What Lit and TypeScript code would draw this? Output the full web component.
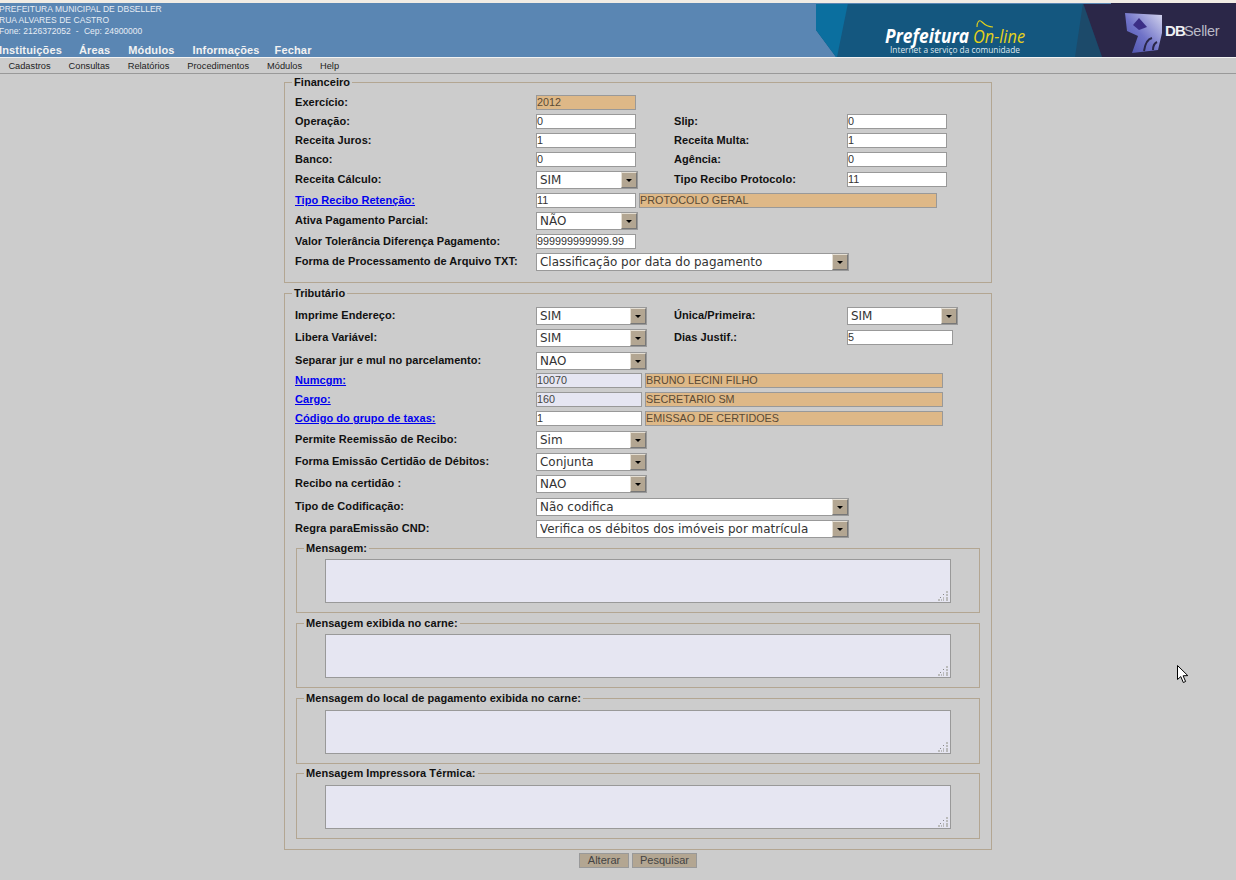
import { LitElement, html, css, nothing } from 'lit';
import { customElement } from 'lit/decorators.js';

type Ctl =
  | { k: 'in'; v: string; w: number; ro?: 'tan' | 'lav'; desc?: string; dw?: number; dg?: number }
  | { k: 'sel'; v: string; w: number };

type Row = { h: number; label: string; link?: boolean; c: Ctl; label2?: string; c2?: Ctl; o2?: number };

const fin: Row[] = [
  { h: 19, label: 'Exercício:', c: { k: 'in', v: '2012', w: 100, ro: 'tan' } },
  { h: 19, label: 'Operação:', c: { k: 'in', v: '0', w: 100 }, label2: 'Slip:', c2: { k: 'in', v: '0', w: 100 } },
  { h: 19, label: 'Receita Juros:', c: { k: 'in', v: '1', w: 100 }, label2: 'Receita Multa:', c2: { k: 'in', v: '1', w: 100 } },
  { h: 19, label: 'Banco:', c: { k: 'in', v: '0', w: 100 }, label2: 'Agência:', c2: { k: 'in', v: '0', w: 100 } },
  { h: 22, label: 'Receita Cálculo:', c: { k: 'sel', v: 'SIM', w: 102 }, label2: 'Tipo Recibo Protocolo:', c2: { k: 'in', v: '11', w: 100 }, o2: 1 },
  { h: 19, label: 'Tipo Recibo Retenção:', link: true, c: { k: 'in', v: '11', w: 100, desc: 'PROTOCOLO GERAL', dw: 298, dg: 3 } },
  { h: 22, label: 'Ativa Pagamento Parcial:', c: { k: 'sel', v: 'NÃO', w: 102 } },
  { h: 19, label: 'Valor Tolerância Diferença Pagamento:', c: { k: 'in', v: '999999999999.99', w: 100 } },
  { h: 18, label: 'Forma de Processamento de Arquivo TXT:', c: { k: 'sel', v: 'Classificação por data do pagamento', w: 313 } },
];

const trib: Row[] = [
  { h: 22, label: 'Imprime Endereço:', c: { k: 'sel', v: 'SIM', w: 111 }, label2: 'Única/Primeira:', c2: { k: 'sel', v: 'SIM', w: 111 } },
  { h: 23, label: 'Libera Variável:', c: { k: 'sel', v: 'SIM', w: 111 }, label2: 'Dias Justif.:', c2: { k: 'in', v: '5', w: 106 }, o2: 1 },
  { h: 21, label: 'Separar jur e mul no parcelamento:', c: { k: 'sel', v: 'NAO', w: 111 } },
  { h: 19, label: 'Numcgm:', link: true, c: { k: 'in', v: '10070', w: 106, ro: 'lav', desc: 'BRUNO LECINI FILHO', dw: 298, dg: 3 } },
  { h: 19, label: 'Cargo:', link: true, c: { k: 'in', v: '160', w: 106, ro: 'lav', desc: 'SECRETARIO SM', dw: 298, dg: 3 } },
  { h: 20, label: 'Código do grupo de taxas:', link: true, c: { k: 'in', v: '1', w: 106, desc: 'EMISSAO DE CERTIDOES', dw: 298, dg: 3 } },
  { h: 22, label: 'Permite Reemissão de Recibo:', c: { k: 'sel', v: 'Sim', w: 111 } },
  { h: 22, label: 'Forma Emissão Certidão de Débitos:', c: { k: 'sel', v: 'Conjunta', w: 111 } },
  { h: 23, label: 'Recibo na certidão :', c: { k: 'sel', v: 'NAO', w: 111 } },
  { h: 22, label: 'Tipo de Codificação:', c: { k: 'sel', v: 'Não codifica', w: 313 } },
  { h: 18, label: 'Regra paraEmissão CND:', c: { k: 'sel', v: 'Verifica os débitos dos imóveis por matrícula', w: 313 } },
];

const msgs = [
  { t: 'Mensagem:', gap: 4, pad: 4 },
  { t: 'Mensagem exibida no carne:', gap: 4, pad: 4 },
  { t: 'Mensagem do local de pagamento exibida no carne:', gap: 4, pad: 5 },
  { t: 'Mensagem Impressora Térmica:', gap: 3, pad: 5 },
];

@customElement('app-root')
export class AppRoot extends LitElement {
  static styles = css`
    :host {
      display: block;
      position: relative;
      height: 880px;
      overflow: hidden;
      background: #cccccc;
      font-family: 'Liberation Sans', Arial, sans-serif;
      color: #111;
    }

    .strip { height: 3px; background: #f1ece4; }
    .head { position: relative; height: 54px; background: #5a86b3; color: #f2f2f2; overflow: hidden; }
    .info { font-size: 8.5px; word-spacing: 0.25px; line-height: 11px; padding-top: 1px; margin-left: -1px; white-space: pre; color: #e6ecf3; }
    .main-menu { display: flex; gap: 18px; margin: 7px 0 0 -1px; font-size: 11px; line-height: 13px; font-weight: bold; letter-spacing: 0.15px; }
    .main-menu span:first-child { margin-right: -1px; }
    .main-menu span:last-child { margin-left: -3px; }
    .banner { position: absolute; right: 0; top: 0; display: block; }
    .sub-menu {
      display: flex; gap: 18px; height: 15px; padding-left: 8.4px;
      border-top: 1px solid #f2f2f2; border-bottom: 1px solid #999;
      font-size: 9.25px; line-height: 16px; color: #222; background: #ccc;
    }

    .form { width: 708px; margin: 2px 0 0 284px; }
    fieldset { box-sizing: border-box; margin: 0; border: 1px solid #b3a692; min-width: 0; }
    legend { padding: 0 2px; font-size: 11px; font-weight: bold; letter-spacing: 0.05px; line-height: 13px; color: #111; }
    .outer { padding: 6px 10px 11px 10px; }
    .outer > legend { margin-left: -3px; }
    .outer + .outer { margin-top: 4px; padding-top: 7px; padding-bottom: 10px; }
    .row {
      display: grid; grid-template-columns: 241px 138px 173px 1fr;
      align-items: start; font-size: 11px; font-weight: bold; letter-spacing: 0.05px; line-height: 15px;
    }
    .wide { grid-column: 2 / -1; }
    a { color: #0000ee; text-decoration: underline; }
    .with-desc { display: flex; }

    input {
      box-sizing: border-box; height: 15px; padding: 0 0 1px 0; margin: 0;
      border: 1px solid #999; background: #fff; color: #333;
      font: 10.8px/13px 'Liberation Sans', Arial, sans-serif; outline: none; display: block;
    }
    input.tan { background: #deb887; color: #5a4a35; }
    input.lav { background: #e6e6f2; color: #444; }

    .sel { box-sizing: border-box; display: flex; height: 18px; border: 1px solid #999; background: #fff; }
    .sel select {
      appearance: none; -webkit-appearance: none; flex: 1; min-width: 0; margin: 0; padding: 0 0 0 3px;
      border: none; border-radius: 0; background: #fff; color: #333; outline: none;
      font: 11.95px/16px 'DejaVu Sans', Verdana, sans-serif;
    }
    .arrow {
      box-sizing: border-box; width: 16px; display: flex; align-items: center; justify-content: center;
      background: #b3a692; border-left: 1px solid #e4ded3; border-top: 1px solid #e4ded3;
      border-right: 1px solid #777; border-bottom: 1px solid #777;
    }
    .arrow i { width: 0; height: 0; border: 3px solid transparent; border-top: 3px solid #000; border-bottom: none; }

    .msg { position: relative; width: 684px; margin-left: 1px; padding: 4px 0 9px 28px; }
    .msg > legend { margin-left: -21px; }
    .msg textarea {
      box-sizing: border-box; display: block; width: 626px; height: 44px; margin: 0; padding: 0;
      border: 1px solid #999; background: #e6e6f2; resize: none; outline: none;
    }
    .grip { position: absolute; display: block; right: 30px; bottom: 10px; }

    .actions { display: flex; justify-content: center; gap: 3px; margin-top: 3px; }
    button {
      box-sizing: border-box; height: 15px; padding: 0; margin: 0; border: 1px solid #999;
      background: #b3a692; color: #444; font: 11px/13px 'Liberation Sans', Arial, sans-serif;
    }
    .b1 { width: 50px; }
    .b2 { width: 65px; }

    .cursor { position: absolute; left: 1177px; top: 665px; display: block; }
  `;

  private ctl(c: Ctl) {
    if (c.k === 'sel') {
      return html`<div class="sel" style="width:${c.w}px">
        <select><option>${c.v}</option></select>
        <span class="arrow"><i></i></span>
      </div>`;
    }
    const input = html`<input class=${c.ro ?? ''} style="width:${c.w}px" .value=${c.v} ?readonly=${!!c.ro} />`;
    if (!c.desc) return input;
    return html`<div class="with-desc" style="gap:${c.dg}px">
      ${input}<input class="tan" style="width:${c.dw}px" .value=${c.desc} readonly />
    </div>`;
  }

  private row(r: Row) {
    const top = r.c.k === 'sel' ? 1 : 0;
    return html`<div class="row" style="height:${r.h}px">
      <div style="padding-top:${top}px">${r.link ? html`<a href="#">${r.label}</a>` : r.label}</div>
      <div class=${r.label2 ? '' : 'wide'}>${this.ctl(r.c)}</div>
      ${r.label2
        ? html`<div style="padding-top:${r.o2 ?? (r.c2?.k === 'sel' ? 1 : 0)}px">${r.label2}</div>
            <div style="padding-top:${r.o2 ?? 0}px">${this.ctl(r.c2!)}</div>`
        : nothing}
    </div>`;
  }

  private banner() {
    return html`<svg class="banner" width="420" height="54" viewBox="0 0 420 54">
      <defs>
        <linearGradient id="mark" x1="1" y1="0" x2="0" y2="1">
          <stop offset="0" stop-color="#d5d6ee" />
          <stop offset="0.55" stop-color="#6f72c8" />
          <stop offset="1" stop-color="#4a4fa8" />
        </linearGradient>
        <filter id="soft"><feGaussianBlur stdDeviation="0.6" /></filter>
      </defs>
      <rect width="420" height="54" fill="#14577f" />
      <polygon points="0,0 0,27 20,54 0,54" fill="#5a86b3" />
      <polygon points="0,0 32,0 21,54 20,54 0,27" fill="#0b6f9f" />
      <polygon points="267,0 286,54 259,54" fill="#1c4a6a" />
      <polygon points="267,0 420,0 420,54 286,54" fill="#2b2748" />
      <rect x="0" y="0" width="295" height="1" fill="#5a86b3" />
      <text x="69" y="40" font-family="'Open Sans', sans-serif" font-size="19" font-weight="700" font-style="italic" fill="#fff" textLength="84" lengthAdjust="spacingAndGlyphs">Prefeitura</text>
      <text x="157" y="40" font-family="'Open Sans', sans-serif" font-size="18" font-style="italic" fill="#e6d21a" textLength="52" lengthAdjust="spacingAndGlyphs">On-line</text>
      <path d="M161 24c0-5 2-8 5-5s6 5 11 5" fill="none" stroke="#e6d21a" stroke-width="1.1" />
      <text x="74" y="50" font-family="'Open Sans', sans-serif" font-size="9" fill="#dfe7ee" textLength="130" lengthAdjust="spacingAndGlyphs">Internet a serviço da comunidade</text>
      <g filter="url(#soft)">
        <polygon points="309,10 346,12 346,30 342,47 316,50 322,33 311,28" fill="url(#mark)" />
        <polygon points="323,15 331,24 323,27 317,22" fill="#3a2f86" />
        <path d="M328 48c1-7 4-12 8-13M337 47c0-4 2-7 4-8" fill="none" stroke="#2b2748" stroke-width="2" />
      </g>
      <text x="349" y="33" font-family="'Liberation Sans', sans-serif" font-size="15" font-weight="700" fill="#f0f0f4" letter-spacing="-0.8">DB</text>
      <text x="368" y="33" font-family="'Liberation Sans', sans-serif" font-size="14.5" fill="#b9b9c6" letter-spacing="-0.3">Seller</text>
    </svg>`;
  }

  render() {
    return html`
      <div class="strip"></div>
      <header class="head">
        ${this.banner()}
        <div class="info">PREFEITURA MUNICIPAL DE DBSELLER
RUA ALVARES DE CASTRO
Fone: 2126372052  -  Cep: 24900000</div>
        <nav class="main-menu">
          <span>Instituições</span><span>Áreas</span><span>Módulos</span><span>Informações</span><span>Fechar</span>
        </nav>
      </header>
      <nav class="sub-menu">
        <span>Cadastros</span><span>Consultas</span><span>Relatórios</span><span>Procedimentos</span><span>Módulos</span><span>Help</span>
      </nav>
      <form class="form">
        <fieldset class="outer">
          <legend>Financeiro</legend>
          ${fin.map((r) => this.row(r))}
        </fieldset>
        <fieldset class="outer">
          <legend>Tributário</legend>
          ${trib.map((r) => this.row(r))}
          ${msgs.map(
            (m) => html`<fieldset class="msg" style="margin-top:${m.gap}px;padding-top:${m.pad}px">
              <legend>${m.t}</legend>
              <textarea></textarea>
              <svg class="grip" width="11" height="11" viewBox="0 0 11 11">
                <g fill="#bbb">
                  <rect x="8" y="0" width="2" height="2" /><rect x="8" y="3" width="2" height="2" /><rect x="8" y="6" width="2" height="2" />
                  <rect x="5" y="3" width="1" height="1" fill="#888" /><rect x="5" y="6" width="1" height="2" /><rect x="2" y="6" width="1" height="1" fill="#888" />
                  <rect x="0" y="8" width="2" height="2" /><rect x="3" y="8" width="1" height="2" /><rect x="5" y="8" width="1" height="2" /><rect x="8" y="8" width="2" height="2" />
                </g>
              </svg>
            </fieldset>`
          )}
        </fieldset>
        <div class="actions">
          <button type="button" class="b1">Alterar</button>
          <button type="button" class="b2">Pesquisar</button>
        </div>
      </form>
      <svg class="cursor" width="13" height="20" viewBox="0 0 13 20">
        <path d="M0.5 0.5 L0.5 14.5 L3.8 11.6 L6.3 17.5 L8.6 16.5 L6.1 10.8 L10.8 10.6 Z" fill="#fff" stroke="#000" stroke-width="1" />
      </svg>
    `;
  }
}
